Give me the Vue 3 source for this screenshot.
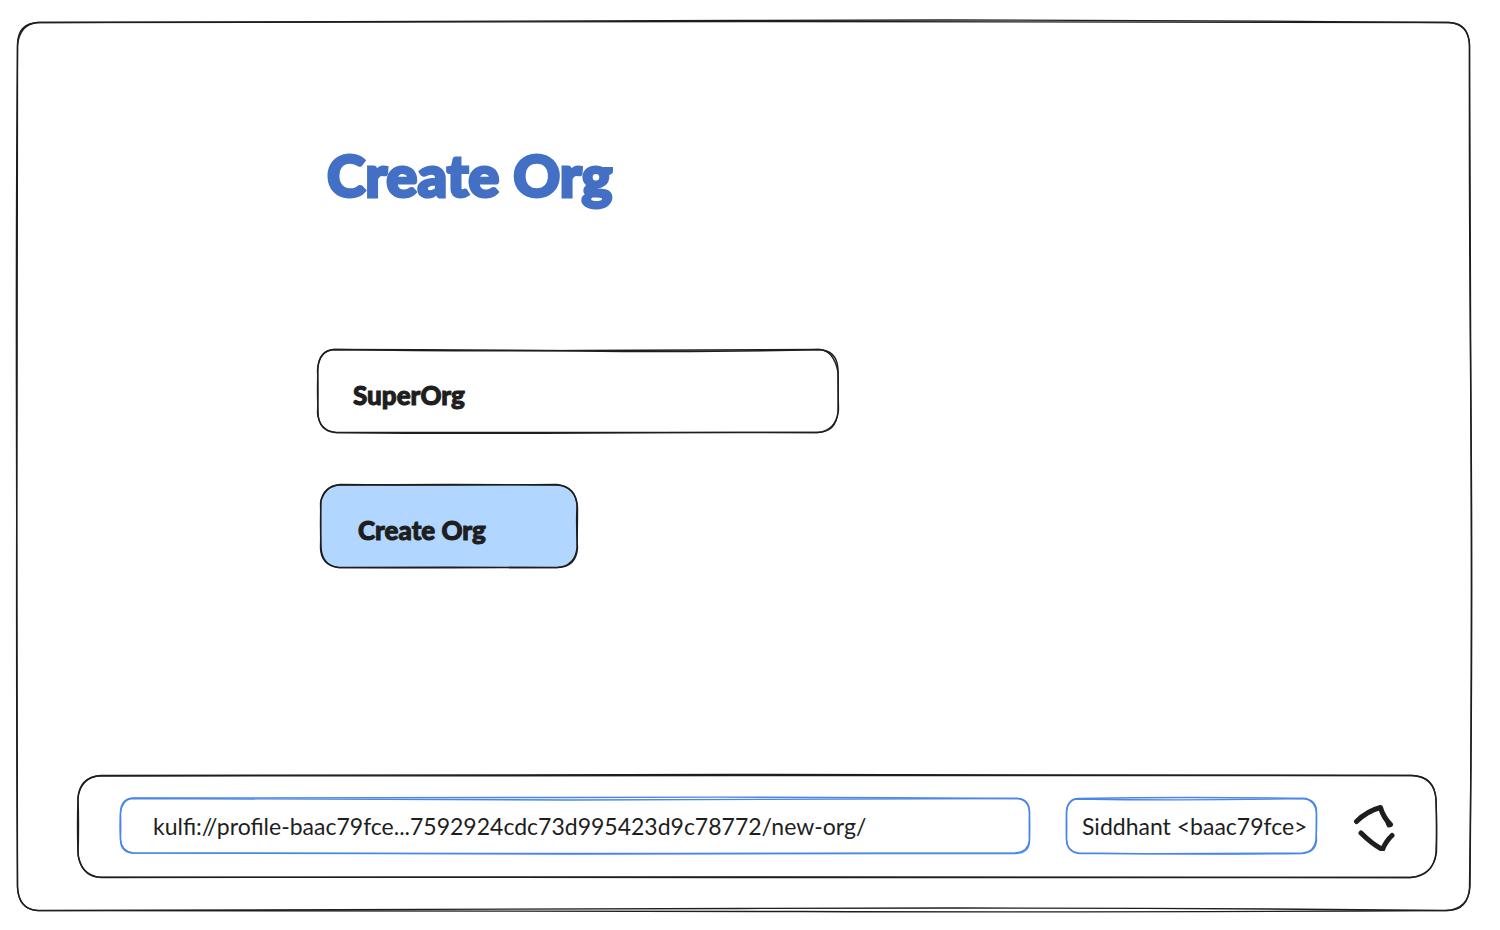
<script setup>
import { ref } from 'vue'

const orgName = ref('SuperOrg')
const address = ref('kulfi://profile-baac79fce...7592924cdc73d995423d9c78772/new-org/')
</script>

<template>
  <div class="page">
    <div class="window">
      <svg class="outline" viewBox="17 21 1454 891" preserveAspectRatio="none" aria-hidden="true">
        <path d="M39 22.5Q400 22 740 20.5T1448 22.5Q1468 23 1469.500 44Q1469 200 1471 420T1469.500 888Q1468 910 1448 910.500Q1100 907 740 908.500T39 910.500Q19 910 17.500 888Q16 650 17 420T17.500 44Q18 23 39 22.500Z" />
        <path d="M37 22.500Q300 21 760 21.500T1450 22.500Q1469 24 1469.500 46Q1470 220 1471 440T1470 886Q1469 909 1446 910.500Q1100 912.500 800 911.500T37 910.500Q18 909 17.500 886Q17 640 16.500 430T17.500 46Q19 25 37 22.500Z" />
      </svg>

      <main class="content">
        <h1 class="title">Create Org</h1>
        <form class="form" @submit.prevent>
          <div class="box name-box">
            <svg class="outline" viewBox="317 349 522 84" preserveAspectRatio="none" aria-hidden="true">
              <path d="M335 349.500Q450 351.500 580 350.500T818 349.500Q837 350 838 369Q838.500 390 838 412Q836 432 818 432.500Q700 433 577 432.500T337 432.500Q319 431 317.500 413Q318.500 390 317.500 370Q319 350 335 349.500Z" />
              <path d="M333 349.500Q450 349.500 580 351T820 349.500Q834 351 838 372Q838 390 838.500 410Q836 431 817 432.500Q700 432 577 433T335 432.500Q318 431 318 411Q317 390 318 368Q319 351 333 349.500Z" />
            </svg>
            <input v-model="orgName" class="name-input heavy" type="text" aria-label="Organisation name" />
          </div>
          <button class="box create heavy" type="submit">
            <svg class="outline" viewBox="320 484 258 84" preserveAspectRatio="none" aria-hidden="true">
              <path class="fill" d="M340 484.500Q450 485.500 557 484.500Q576 487 577 506Q576 525 577.500 548Q576 567 558 567.500Q450 568 338 567.500Q321 565 320.500 548Q321 525 320.500 503Q323 486 340 484.500Z" />
              <path d="M338 485Q450 484 558 485Q576 487 577.500 507Q577.500 525 577 548Q575 566 557 567.500Q450 567 339 567.500Q322 566 321 547Q320 525 321 501Q325 487 338 485Z" />
            </svg>
            <span>Create Org</span>
          </button>
        </form>
      </main>

      <footer class="box bar">
        <svg class="outline" viewBox="78 775 1359 103" preserveAspectRatio="none" aria-hidden="true">
          <path d="M101 775.500Q420 775.500 740 774.500T1411 775.500Q1435 776 1436 800Q1437 826 1436 853Q1433 876 1411 877.500Q1080 878 740 877T101 877.500Q79 875 78 852Q77 826 78 799Q79 777 101 775.500Z" />
          <path d="M97 776Q420 774.500 740 775.500T1413 775.500Q1434 777 1436 799Q1437 826 1436.500 852Q1434 875 1410 877.500Q1080 876.500 740 877.500T97 877Q82 875 78 855Q79 826 78 797Q81 779 97 776Z" />
        </svg>
        <div class="box address">
          <svg class="outline blue" viewBox="120 797 910 56" preserveAspectRatio="none" aria-hidden="true">
            <path d="M133 797Q350 797.500 570 796.500T1017 797.500Q1029 798 1029.500 810Q1029 825 1029.500 840Q1029 852 1016 852.500Q790 852 570 852.500T132 852Q121 851 120.500 839Q119.500 825 120.500 811Q121 798 133 797Z" />
            <path d="M131 797.500Q350 799 570 799T1018 797.500Q1029 799 1029.500 812Q1030 825 1029.500 839Q1028 851 1015 852Q790 853 570 853T133 852Q121 850 120.500 838Q121 825 120.500 812Q122 799 131 797.500Z" />
          </svg>
          <input v-model="address" class="address-input" type="text" aria-label="Address" />
        </div>
        <button class="box identity" type="button">
          <svg class="outline blue" viewBox="1066 799 251 56" preserveAspectRatio="none" aria-hidden="true">
            <path d="M1078 799.500Q1190 797.500 1304 799.500Q1316 801 1316.500 812Q1316 826 1316.500 842Q1315 854 1302 854.500Q1190 856 1078 854Q1067 852 1066.500 841Q1066 826 1066.500 813Q1067 801 1078 799.500Z" />
            <path d="M1075 800Q1190 802 1306 799.500Q1316 803 1316.500 814Q1317 826 1316 841Q1314 853 1303 854Q1190 855 1079 854.500Q1067 853 1066.500 840Q1067 826 1066.500 811Q1069 801 1075 800Z" />
          </svg>
          <span>Siddhant &lt;baac79fce&gt;</span>
        </button>
        <button class="switcher" type="button" aria-label="Switch profile">
          <svg viewBox="1353 801 42 50" aria-hidden="true">
            <path d="M1356.500 821.500Q1367 811 1380.500 807.500Q1383 817 1390.500 824.500M1387.500 821.500L1389 825" />
            <path d="M1361 833Q1372 844 1382.500 849.500Q1386 841 1392 835.500" />
          </svg>
        </button>
      </footer>
    </div>
  </div>
</template>

<style>
html,
body {
  background: #ffffff;
}
</style>

<style scoped>
.page {
  box-sizing: border-box;
  min-height: 100vh;
  padding: 21px 29px 18px 17px;
  display: flex;
  color: #1e1e1e;
  font-family: Lato, sans-serif;
}

.window {
  position: relative;
  box-sizing: border-box;
  flex: 1;
  min-width: 0;
  padding: 118px 34px 34px 61px;
  display: flex;
  flex-direction: column;
}

.outline {
  position: absolute;
  inset: 0;
  width: 100%;
  height: 100%;
  overflow: visible;
  pointer-events: none;
}

.outline path {
  fill: none;
  stroke: #1e1e1e;
  stroke-width: 1.4;
  stroke-linecap: round;
  vector-effect: non-scaling-stroke;
}

.outline .fill {
  fill: #b1d6ff;
}

.blue path {
  stroke: #4a86e8;
}

.content {
  flex: 1;
  padding-left: 239px;
}

.title {
  margin: 0;
  padding-left: 10px;
  font-size: 58px;
  line-height: 72px;
  font-weight: 900;
  color: #4370c4;
  -webkit-text-stroke: 3px #4370c4;
}

.form {
  margin-top: 138px;
  display: flex;
  flex-direction: column;
  align-items: flex-start;
  gap: 51px;
}

.box {
  position: relative;
  box-sizing: border-box;
}

input,
button {
  margin: 0;
  padding: 0;
  border: 0;
  outline: 0;
  background: none;
  color: inherit;
  font-family: inherit;
}

.heavy {
  font-size: 26px;
  line-height: 32px;
  font-weight: 900;
  -webkit-text-stroke: 1px #1e1e1e;
}

.name-box {
  width: 522px;
  max-width: 100%;
  height: 84px;
}

.name-input {
  position: relative;
  box-sizing: border-box;
  width: 100%;
  height: 100%;
  padding: 8px 36px 0;
}

.create {
  width: 258px;
  height: 84px;
  margin-left: 3px;
  padding: 8px 38px 0;
  text-align: left;
}

.create span,
.identity span {
  position: relative;
}

.bar {
  min-height: 103px;
  padding: 0 42px 2px;
  display: flex;
  align-items: center;
  gap: 36px;
}

.address {
  flex: 1;
  min-width: 0;
  height: 56px;
}

.address-input {
  position: relative;
  box-sizing: border-box;
  width: 100%;
  height: 100%;
  padding: 0 33px;
  font-size: 23px;
  line-height: 28px;
}

.identity {
  width: 251px;
  height: 56px;
  padding: 0 0 0 16px;
  text-align: left;
  white-space: nowrap;
  font-size: 23px;
  line-height: 28px;
}

.switcher {
  width: 42px;
  height: 50px;
}

.switcher svg {
  display: block;
  width: 100%;
  height: 100%;
  fill: none;
  stroke: #1e1e1e;
  stroke-width: 5;
  stroke-linecap: round;
  stroke-linejoin: round;
}
</style>
